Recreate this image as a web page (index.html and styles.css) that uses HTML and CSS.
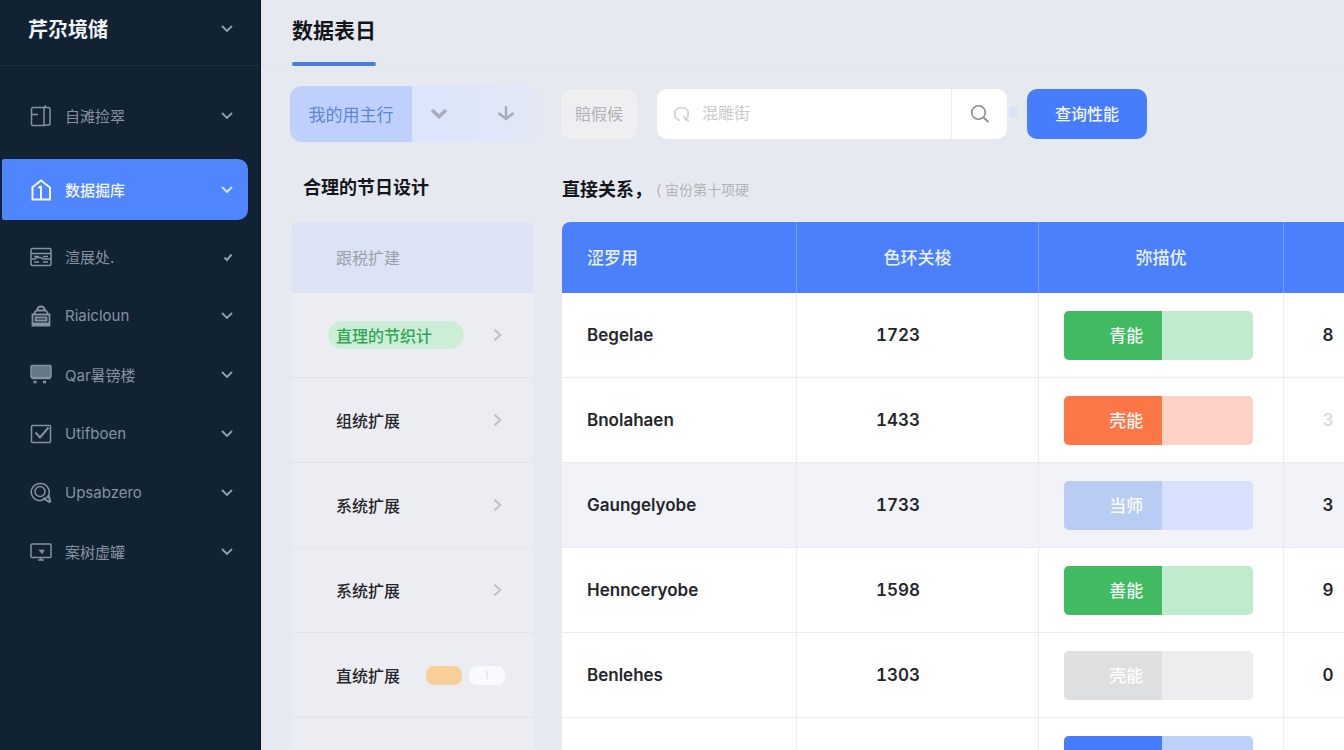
FILE: index.html
```html
<!DOCTYPE html>
<html lang="zh-CN">
<head>
<meta charset="utf-8">
<meta name="viewport" content="width=device-width, initial-scale=1">
<title>数据表日</title>
<link rel="stylesheet" href="styles.css">
</head>
<body>
<svg width="0" height="0" class="sprite" aria-hidden="true">
  <symbol id="down" viewBox="0 0 12 12"><path d="M1.500 3.500 6 8l4.500-4.500" fill="none" stroke="currentColor" stroke-width="1.800" stroke-linecap="round"/></symbol>
  <symbol id="right" viewBox="0 0 12 12"><path d="M3 1.500 8 6l-5 4.500" fill="none" stroke="currentColor" stroke-width="1.600"/></symbol>
</svg>
<div class="app">
  <aside class="sidebar">
    <button class="brand" type="button"><span>芹尕境储</span><svg class="caret"><use href="#down"/></svg></button>
    <nav class="nav">
      <a class="nav-item first" href="#"><svg class="icon" viewBox="0 0 22 22"><path d="M3 2.500h11v18H3a1.500 1.500 0 0 1-1.500-1.500V4A1.500 1.500 0 0 1 3 2.500zM14 2.500h4.500a1.500 1.500 0 0 1 1.500 1.500v14.500a1.500 1.500 0 0 1-1.500 1.500H14M14 2.500 16 .5M2 9.500h6"/></svg><span>自滩捡翠</span><svg class="caret"><use href="#down"/></svg></a>
      <a class="nav-item active" href="#" aria-current="page"><svg class="icon" viewBox="0 0 22 22"><path d="M1.500 9 11 1.500 20.500 9M2.500 8.500v12h17.500v-12M11 7v13M8.500 9 11 7" /></svg><span>数据掘库</span><svg class="caret"><use href="#down"/></svg></a>
      <a class="nav-item" href="#"><svg class="icon" viewBox="0 0 22 22"><rect x="1" y="2.500" width="20" height="17" rx="1.500"/><path d="M1 7.500h20M1 13h4l2-1.500h4l2 1.500h8M4 10.500h5M13 10.500h5M4 16h5M13 16h5"/></svg><span>渲展处.</span><svg class="caret" viewBox="0 0 12 12"><path d="M3.500 6.500 6 9l4.500-5.500" fill="none" stroke="currentColor" stroke-width="2"/></svg></a>
      <a class="nav-item" href="#"><svg class="icon" viewBox="0 0 22 22"><path d="M2.500 9.500h17v11h-17zM4 9c.5-2 1.500-3 3-4M18 9c-.5-2-1.500-3-3-4M7 5.500C7.500 2.500 9 1.500 11 1.500s3.500 1 4 4zM5.500 12.500h11v3h-11zM3 18.500h16" stroke-width="1.800"/></svg><span>Riaicloun</span><svg class="caret"><use href="#down"/></svg></a>
      <a class="nav-item" href="#"><svg class="icon" viewBox="0 0 22 22"><rect class="solid" x="1" y="1.500" width="20" height="12" rx="1"/><path d="M1.500 14.500h19"/><path d="M3.500 18h3M13 18h3" stroke-width="2.500"/></svg><span>Qar暑镑楼</span><svg class="caret"><use href="#down"/></svg></a>
      <a class="nav-item" href="#"><svg class="icon" viewBox="0 0 22 22"><rect x="1.500" y="2.500" width="19" height="17" rx="1"/><path d="m5.500 9.500 4.500 5L18.500 4.500" stroke-width="2"/></svg><span>Utifboen</span><svg class="caret"><use href="#down"/></svg></a>
      <a class="nav-item" href="#"><svg class="icon" viewBox="0 0 22 22"><path d="M10 1.500a8.500 8.500 0 1 0 2 16.700L17.500 15A8.500 8.500 0 0 0 10 1.500z"/><circle cx="10" cy="9.500" r="5"/><path d="m13 16 7 4.500M18.500 13l2 7.500" stroke-width="2"/></svg><span>Upsabzero</span><svg class="caret"><use href="#down"/></svg></a>
      <a class="nav-item" href="#"><svg class="icon" viewBox="0 0 22 22"><rect x="1" y="3" width="20" height="13.500" rx="1"/><path d="M10 9.500h3.500L12 12zM8 19h6M11 17v2"/></svg><span>案树虚罐</span><svg class="caret"><use href="#down"/></svg></a>
    </nav>
  </aside>

  <main class="main">
    <header class="topbar"><h1 class="title">数据表日</h1></header>

    <div class="toolbar">
      <div class="segment">
        <button class="segment-main" type="button">我的用主行</button>
        <button class="segment-icon" type="button" aria-label="展开"><svg width="18" height="18" viewBox="0 0 18 18"><path d="m2 5 7 6.500L16 5" fill="none" stroke="currentColor" stroke-width="3.500"/></svg></button>
        <button class="segment-icon wide" type="button" aria-label="下载"><svg width="18" height="18" viewBox="0 0 18 18"><path d="M9 1v13M1.500 8 9 14l7.500-6" fill="none" stroke="currentColor" stroke-width="2.500"/></svg></button>
      </div>
      <button class="filter" type="button">賠假候</button>
      <form class="search" onsubmit="return false">
        <label class="search-label" for="q"><svg width="18" height="18" viewBox="0 0 18 18"><path d="M7 15H5l-3-3V6l3-3h7l3 3v6l-2 2-3-3M12 14l4 2" fill="none" stroke="currentColor" stroke-width="1.600"/></svg></label>
        <input class="search-input" id="q" type="text" placeholder="混雕街" aria-label="搜索">
        <button class="search-go" type="submit" aria-label="搜索"><svg width="20" height="20" viewBox="0 0 20 20"><circle cx="8.500" cy="8.500" r="6.800" fill="none" stroke="currentColor" stroke-width="1.600"/><path d="m13.500 13.500 5 4.500" stroke="currentColor" stroke-width="1.800"/></svg></button>
      </form>
      <button class="primary" type="button">查询性能</button>
    </div>

    <div class="content">
      <section class="panel">
        <h2 class="heading indent">合理的节日设计</h2>
        <div class="list">
          <div class="list-head">跟税扩建</div>
          <a class="list-row" href="#"><span class="tag">直理的节织计</span><svg class="go"><use href="#right"/></svg></a>
          <a class="list-row" href="#"><span>组统扩展</span><svg class="go"><use href="#right"/></svg></a>
          <a class="list-row" href="#"><span>系统扩展</span><svg class="go"><use href="#right"/></svg></a>
          <a class="list-row" href="#"><span>系统扩展</span><svg class="go"><use href="#right"/></svg></a>
          <div class="list-row"><span>直统扩展</span><span class="pills"><button class="pill orange" type="button" aria-label="标记"></button><button class="pill" type="button">!</button></span></div>
          <a class="list-row" href="#"><span>系统扩展</span></a>
        </div>
      </section>

      <section class="panel">
        <h2 class="heading">直接关系，<small class="note">( 宙份第十项硬</small></h2>
        <div class="table-wrap">
          <table class="table">
            <colgroup><col class="c1"><col class="c2"><col class="c3"><col class="c4"></colgroup>
            <thead><tr><th class="name">涩罗用</th><th>色环关梭</th><th>弥描优</th><th></th></tr></thead>
            <tbody>
              <tr><td>Begelae</td><td class="num">1723</td><td><div class="bar green"><span>青能</span></div></td><td class="score">8</td></tr>
              <tr><td>Bnolahaen</td><td class="num">1433</td><td><div class="bar red"><span>壳能</span></div></td><td class="score faint">3</td></tr>
              <tr class="selected"><td>Gaungelyobe</td><td class="num">1733</td><td><div class="bar pale"><span>当师</span></div></td><td class="score">3</td></tr>
              <tr><td>Hennceryobe</td><td class="num">1598</td><td><div class="bar green"><span>善能</span></div></td><td class="score">9</td></tr>
              <tr><td>Benlehes</td><td class="num">1303</td><td><div class="bar grey"><span>壳能</span></div></td><td class="score">0</td></tr>
              <tr><td>Benlehoen</td><td class="num">1303</td><td><div class="bar blue"><span>青能</span></div></td><td class="score faint">0</td></tr>
            </tbody>
          </table>
        </div>
      </section>
    </div>
  </main>
</div>
</body>
</html>
```

FILE: styles.css
```css
* { box-sizing: border-box; }

body {
  margin: 0;
  overflow: hidden;
  background: #e7e9f0;
  color: #24262b;
  font-family: Inter, "Noto Sans CJK SC", sans-serif;
  font-size: 16px;
}

button, input { font: inherit; color: inherit; border: 0; padding: 0; background: none; }
button { cursor: pointer; }
a { color: inherit; text-decoration: none; }
h1, h2 { margin: 0; }
svg { flex: none; display: block; }
.sprite { position: absolute; }

.app { display: flex; height: 100vh; overflow: hidden; }

/* Sidebar */
.sidebar { flex: 0 0 261px; background: #112233; border-right: 1px solid #0a1520; color: #8592a0; }

.brand {
  display: flex;
  align-items: center;
  justify-content: space-between;
  width: 100%;
  height: 66px;
  padding: 0 27px 8px 28px;
  border-bottom: 1px solid #1a2e40;
  color: #f2f5f8;
  font-size: 20px;
  font-weight: 700;
}

.caret { width: 12px; height: 12px; color: #94a1ae; }
.nav { display: flex; flex-direction: column; padding-top: 20px; font-size: 15px; }

.nav-item {
  display: flex;
  align-items: center;
  gap: 13px;
  height: 59px;
  padding: 0 27px 0 30px;
}
.nav-item .caret { margin-left: auto; }
.first { margin-bottom: 14px; }
.active {
  height: 61px;
  margin: 0 12px 7px 2px;
  padding: 0 15px 0 28px;
  border-radius: 2px 10px 10px 2px;
  background: #4f85fe;
  color: #f1f6ff;
  font-weight: 500;
}
.active .caret { color: #dce8ff; }

.icon { width: 22px; height: 22px; fill: none; stroke: currentColor; stroke-width: 1.5; }
.active .icon { stroke-width: 2; }
.solid { fill: #66788a; }

/* Main */
.main { flex: 1; min-width: 0; }
.topbar { height: 66px; padding-left: 31px; border-bottom: 1px solid #dfe3ec; }
.title {
  display: inline-flex;
  flex-direction: column;
  justify-content: space-between;
  height: 66px;
  padding-top: 16px;
  color: #14161b;
  font-size: 21px;
  line-height: 30px;
  font-weight: 700;
}
.title::after { content: ""; height: 4px; border-radius: 2px; background: #4a7bdf; }

.toolbar { display: flex; align-items: center; gap: 20px; padding: 20px 32px 0 29px; }

.segment {
  display: flex;
  flex: 0 0 251px;
  height: 56px;
  overflow: hidden;
  border-radius: 12px;
  background: linear-gradient(90deg, #dce5fb 60%, #e4e8f4);
  color: #a6acb8;
}
.segment-main { width: 122px; background: #bfd0fd; color: #5b86dc; font-size: 17px; }
.segment-icon { display: flex; align-items: center; justify-content: center; width: 53px; }
.segment-icon.wide { flex: 1; padding-left: 6px; }

.filter { flex: 0 0 76px; height: 50px; border-radius: 10px; background: #efeff2; color: #b0b1b5; }

.search {
  position: relative;
  display: flex;
  flex: 0 1 350px;
  height: 50px;
  border-radius: 10px;
  background: #fff;
}
.search::after {
  content: "";
  position: absolute;
  top: 18px;
  left: calc(100% + 2px);
  width: 8px;
  height: 10px;
  background: #d9e3f6;
}
.search-label { display: flex; align-items: center; padding: 0 11px 0 16px; color: #cfcfcf; }
.search-input { flex: 1; min-width: 0; outline: 0; }
.search-input::placeholder { color: #cbcbcb; opacity: 1; }
.search-go { display: flex; align-items: center; justify-content: center; width: 56px; border-left: 1px solid #ececec; color: #8c8c8c; }

.primary { flex: 0 0 120px; height: 50px; border-radius: 10px; background: #467dfc; color: #f1f6ff; font-weight: 500; }
.segment-main, .filter, .search-input, .primary { padding-bottom: 2px; }

.content { display: grid; grid-template-columns: 241px minmax(0, 1fr); gap: 29px; padding-left: 31px; }
.heading {
  display: flex;
  align-items: center;
  height: 80px;
  padding-top: 12px;
  color: #14161b;
  font-size: 18px;
  font-weight: 700;
}
.indent { padding: 8px 0 0 11px; }
.note { padding: 2px 0 0 4px; color: #b2b4ba; font-size: 14px; font-weight: 400; }

/* List */
.list { border-radius: 6px 6px 0 0; background: #ecedf2; }
.list-head {
  display: flex;
  align-items: center;
  height: 71px;
  padding: 0 0 2px 44px;
  border-radius: 6px 6px 0 0;
  background: #dce3f4;
  color: #9a9fab;
}
.list-row {
  display: flex;
  align-items: center;
  justify-content: space-between;
  height: 85px;
  padding: 0 28px 0 44px;
  border-bottom: 1px solid #e3e4ea;
  font-weight: 500;
}
.go { width: 14px; height: 14px; color: #bdbfc5; }
.tag {
  margin-left: -8px;
  padding: 2px 32px 2px 8px;
  border-radius: 14px;
  background: #cdeed6;
  color: #31a553;
}
.pills { display: flex; gap: 7px; }
.pill { width: 36px; height: 19px; border-radius: 8px; background: #f9fafc; color: #e2e4e9; font-size: 12px; }
.orange { background: #f8cf98; }

/* Table */
.table-wrap { overflow: hidden; border-radius: 8px 0 0 0; }
.table {
  width: 100%;
  min-width: 811px;
  table-layout: fixed;
  border-spacing: 0;
  background: #fff;
  font-variant-numeric: tabular-nums;
}
.c1 { width: 235px; }
.c2 { width: 242px; }
.c3 { width: 245px; }
.c4 { width: 89px; }
.table th {
  height: 71px;
  padding: 0 0 2px;
  border-right: 1px solid #779dfd;
  background: #4b80fd;
  color: #e9f1ff;
  font-size: 17px;
  font-weight: 500;
}
.table .name { padding-left: 25px; text-align: left; }
.table td {
  height: 85px;
  padding: 0 30px 0 25px;
  border-right: 1px solid #ebebf0;
  border-bottom: 1px solid #ebebf0;
  font-size: 17px;
  font-weight: 600;
}
.table .num { padding-left: 79px; }
.table .score { padding: 0; text-align: center; }
.table .faint { color: #dcdcdf; }
.selected td { background: #f2f3f8; }

.bar { height: 49px; overflow: hidden; border-radius: 5px; color: #fffffff0; font-weight: 500; }
.bar span {
  display: flex;
  align-items: center;
  justify-content: flex-end;
  width: 52%;
  height: 100%;
  padding: 0 19px 2px 0;
}
.green { background: #c0ecce; }
.green span { background: #41bb62; }
.red { background: #fdd1c5; }
.red span { background: #fb7748; }
.pale { background: #d7e1fd; }
.pale span { background: #b8ccf4; }
.grey { background: #ededef; }
.grey span { background: #dedfe1; }
.blue { background: #bdd0fc; }
.blue span { background: #467dfc; }
```
